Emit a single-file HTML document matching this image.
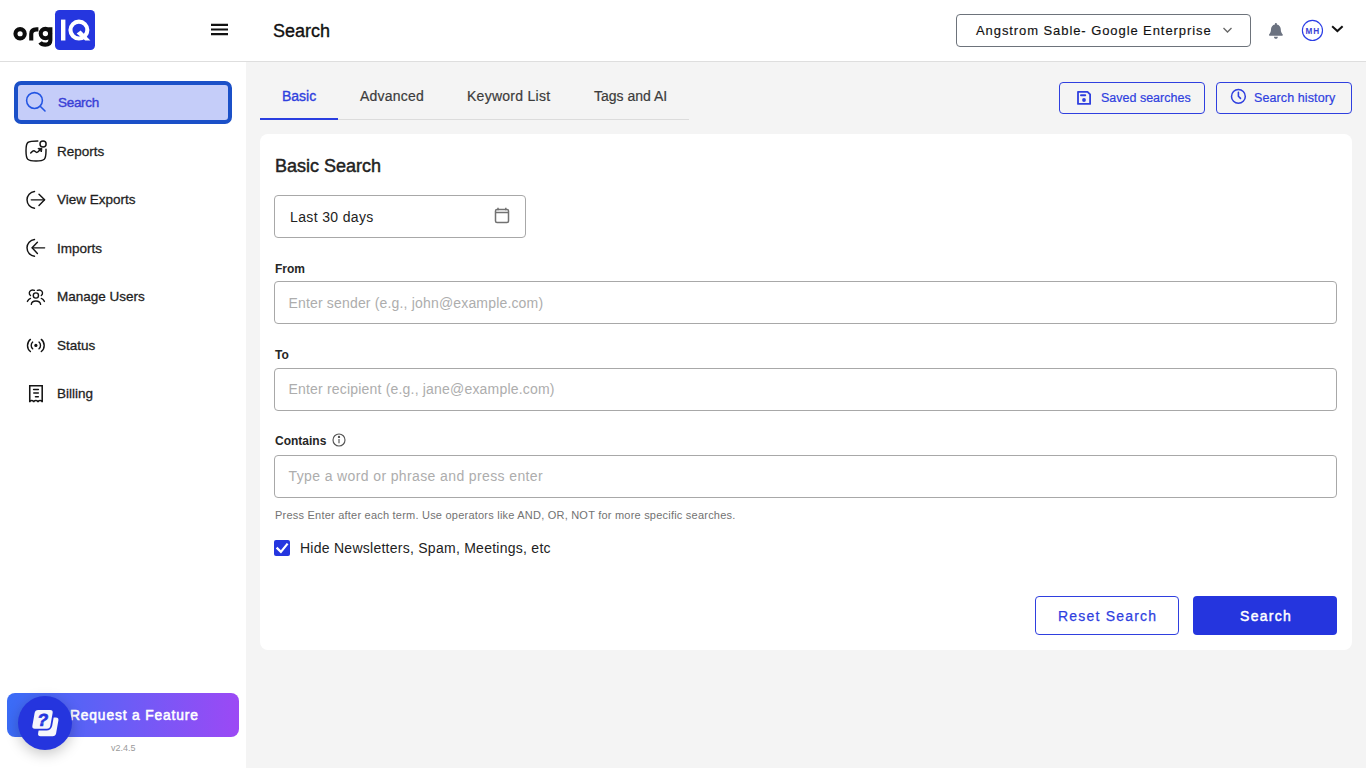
<!DOCTYPE html>
<html><head><meta charset="utf-8">
<style>
*{box-sizing:border-box;margin:0;padding:0}
html,body{width:1366px;height:768px;overflow:hidden;background:#f4f4f4;font-family:"Liberation Sans",sans-serif;color:#222}
.abs{position:absolute}
#header{position:absolute;left:0;top:0;width:1366px;height:62px;background:#fff;border-bottom:1px solid #dedede}
#sidebar{position:absolute;left:0;top:62px;width:246px;height:706px;background:#fff}
.nav{position:absolute;left:14px;width:217px;height:43px}
.nav .ic{position:absolute;left:11px;top:50%;transform:translateY(-50%)}
.nav .tx{position:absolute;left:44px;font-size:13.5px;color:#222;white-space:nowrap}
.tx2{font-size:13.5px;color:#1e1e1e;-webkit-text-stroke:.28px #1e1e1e;white-space:nowrap;line-height:16px}
.tab{position:absolute;top:88px;font-size:14px;color:#3c3c3c;white-space:nowrap;-webkit-text-stroke:.2px #3c3c3c}
#card{position:absolute;left:260px;top:134px;width:1092px;height:516px;background:#fff;border-radius:8px}
.lbl{position:absolute;left:275px;font-size:12px;font-weight:bold;color:#262626}
.inp{position:absolute;left:274px;width:1063px;height:43px;border:1px solid #a8a8a8;border-radius:4px;background:#fff}
.ph{position:absolute;left:15px;font-size:14px;color:#adadad;white-space:nowrap}
.obtn{position:absolute;border:1px solid #2f3fdf;border-radius:4px;color:#2f3fdf;background:transparent}
</style></head>
<body>
<div id="header">
  <!-- logo -->
  <svg class="abs" style="left:0;top:0" width="100" height="60" viewBox="0 0 100 60">
    <g fill="none" stroke="#0d0d0d" stroke-width="4.1">
      <circle cx="20.1" cy="33.75" r="4.65"/>
      <path d="M31.25 40.5V34C31.25 30.6 33 29.35 36.5 29.35H38.4" stroke-linecap="butt"/>
      <circle cx="45.4" cy="33.6" r="4.7"/>
      <path d="M50.35 27.3V40.2C50.35 43.5 48 44.65 45.3 44.65 43 44.65 41.2 43.9 40.1 42.3"/>
    </g>
    <rect x="55" y="10" width="40" height="40" rx="4.5" fill="#2536df"/>
    <rect x="61" y="19.6" width="4.4" height="20.9" fill="#fff"/>
    <circle cx="78.9" cy="30.05" r="8.45" fill="none" stroke="#fff" stroke-width="4.1"/>
    <path d="M76.6 33.4L80.6 30.4L90.4 40.5H85.2Z" fill="#fff"/>
  </svg>
  <!-- hamburger -->
  <svg class="abs" style="left:210px;top:20px" width="20" height="18" viewBox="0 20 20 18"><path d="M1 24.85H18M1 29.45H18M1 34.1H18" stroke="#111" stroke-width="2.05"/></svg>
  <div class="abs" style="left:273px;top:20px;font-size:18px;color:#111;line-height:22px;-webkit-text-stroke:.35px #111">Search</div>
  <!-- org dropdown -->
  <div class="abs" style="left:956px;top:14px;width:295px;height:33px;border:1px solid #6d737b;border-radius:4px"></div>
  <div class="abs" style="left:976px;top:23px;font-size:13px;letter-spacing:.92px;color:#111;-webkit-text-stroke:.15px #111;line-height:16px;white-space:nowrap">Angstrom Sable- Google Enterprise</div>
  <svg class="abs" style="left:1222px;top:26px" width="11" height="8" viewBox="0 0 11 8"><path d="M1.5 2 L5.5 6 L9.5 2" fill="none" stroke="#666" stroke-width="1.3"/></svg>
  <!-- bell -->
  <svg class="abs" style="left:1269.1px;top:23px" width="13.8" height="15.8" viewBox="0 0 448 512"><path fill="#6b7280" d="M224 0c-17.7 0-32 14.3-32 32v19.2C119 66 64 130.6 64 208v18.8c0 47-17.3 92.4-48.5 127.6l-7.4 8.3c-8.4 9.4-10.4 22.9-5.3 34.4S19.4 416 32 416H416c12.6 0 24-7.4 29.2-18.9s3.1-25-5.3-34.4l-7.4-8.3C401.3 319.2 384 273.9 384 226.8V208c0-77.4-55-142-128-156.8V32c0-17.7-14.3-32-32-32zm45.3 493.3c12-12 18.7-28.3 18.7-45.3H224 160c0 17 6.7 33.3 18.7 45.3s28.3 18.7 45.3 18.7s33.3-6.7 45.3-18.7z"/></svg>
  <!-- avatar -->
  <svg class="abs" style="left:1300px;top:18px" width="25" height="25" viewBox="0 0 25 25"><circle cx="12.45" cy="12.4" r="10.05" fill="none" stroke="#2b3ee6" stroke-width="1.15"/><text x="12.9" y="15.8" text-anchor="middle" font-family="Liberation Sans" font-weight="bold" font-size="8.2" letter-spacing="1.1" fill="#3b3fd6">MH</text></svg>
  <svg class="abs" style="left:1330px;top:23px" width="15" height="11" viewBox="0 0 15 11"><path d="M2.9 3.9 L7.4 8.1 L11.9 3.9" fill="none" stroke="#111" stroke-width="2" stroke-linecap="square"/></svg>
</div>

<div id="sidebar">
  <div class="nav" style="top:19px;height:42.5px;width:218px;background:#c5cdf9;border:4px solid #1b50c8;border-radius:7px">
    <svg class="ic" style="left:7px" width="22" height="22" viewBox="0 0 22 22"><circle cx="9.5" cy="9.5" r="7.9" fill="none" stroke="#2355e3" stroke-width="1.55"/><path d="M15.2 15.2 L20 20" stroke="#2355e3" stroke-width="1.6" stroke-linecap="round"/></svg>
    <div class="tx" style="left:40px;top:9.5px;color:#3a3fd6;letter-spacing:-.3px;-webkit-text-stroke:.4px #3a3fd6;line-height:16px">Search</div>
  </div>

  <svg class="abs" style="left:20px;top:74px" width="30" height="30" viewBox="0 0 30 30" fill="none" stroke="#141414" stroke-width="1.45" stroke-linecap="round" stroke-linejoin="round"><path d="M17.8 5C13 5 9.5 5.2 8 6.4 6.3 7.7 6 10.5 6 14.8c0 4.3.3 7 1.8 8.5 1.5 1.4 4.2 1.7 8.2 1.7s6.7-.3 8.2-1.7c1.5-1.5 1.8-4.2 1.8-8.5V13.3"/><circle cx="23.05" cy="8" r="3.05"/><path d="M10.7 17c1.3-1.4 2.3-2.6 3.5-2.2 1 .4 1.6 1.8 2.8 1.6 1-.2 1.8-1.4 3-2.6"/><path d="M18.4 12.4L21.9 12.3 21.5 15.6Z" fill="#141414" stroke-width="1"/></svg>
  <div class="abs tx2" style="left:57px;top:82px">Reports</div>
  <svg class="abs" style="left:20px;top:123px" width="30" height="30" viewBox="0 0 30 30" fill="none" stroke="#141414" stroke-width="1.45" stroke-linecap="round" stroke-linejoin="round"><path d="M14.5 6.5A8.4 8.4 0 0 0 14.5 23.2"/><path d="M11.3 14.85H24.4"/><path d="M19 9.2L24.6 14.85 19 20.5"/></svg>
  <div class="abs tx2" style="left:57px;top:130px">View Exports</div>
  <svg class="abs" style="left:20px;top:171px" width="30" height="30" viewBox="0 0 30 30" fill="none" stroke="#141414" stroke-width="1.45" stroke-linecap="round" stroke-linejoin="round"><path d="M14.5 6.5A8.4 8.4 0 0 0 14.5 23.2"/><path d="M12.3 14.85H24.6"/><path d="M17.4 9.2L12.1 14.85 17.4 20.5"/></svg>
  <div class="abs tx2" style="left:57px;top:179px">Imports</div>
  <svg class="abs" style="left:22px;top:222px" width="28" height="26" viewBox="0 0 28 26" fill="none" stroke="#141414" stroke-width="1.4" stroke-linecap="round" stroke-linejoin="round"><circle cx="13.9" cy="11.5" r="2.6"/><path d="M12.4 6.4C10 5.5 7.5 6.2 7.3 8.8 7.2 10 7.8 11 8.5 11.5"/><path d="M15.4 6.4C17.8 5.5 20.3 6.2 20.5 8.8 20.6 10 20 11 19.3 11.5"/><path d="M8.5 14.4Q6.5 15.2 5.4 17.4"/><path d="M19.3 14.4Q21.3 15.2 22.4 17.4"/><path d="M9.3 20.3C9.6 17.8 11.5 17 13.9 17S18.2 17.8 18.6 20.3"/></svg>
  <div class="abs tx2" style="left:57px;top:227px">Manage Users</div>
  <svg class="abs" style="left:22px;top:268px" width="28" height="30" viewBox="0 0 28 30" fill="none" stroke="#141414" stroke-width="1.4" stroke-linecap="round"><path d="M8.4 9.4A7.76 7.76 0 0 0 8.4 21.5"/><path d="M10.7 12.1A4.44 4.44 0 0 0 10.7 18.75"/><path d="M19.3 9.4A7.76 7.76 0 0 1 19.3 21.5"/><path d="M17 12.1A4.44 4.44 0 0 1 17 18.75"/><circle cx="13.87" cy="15.4" r="1.6" fill="#141414" stroke="none"/></svg>
  <div class="abs tx2" style="left:57px;top:276px">Status</div>
  <svg class="abs" style="left:22px;top:318px" width="28" height="28" viewBox="0 0 28 28" fill="none" stroke="#141414" stroke-width="1.55" stroke-linecap="round" stroke-linejoin="round"><path d="M7.75 22.3V5.7H20.2V22.3A2.1 1.8 0 0 0 16 22.3A2.15 1.8 0 0 0 11.7 22.3A1.97 1.8 0 0 0 7.75 22.3Z" stroke-linecap="butt" stroke-linejoin="miter"/><path d="M11.6 9.4H16.4M11.8 13.05H16.3M13.5 16.8H16.3"/></svg>
  <div class="abs tx2" style="left:57px;top:324px">Billing</div>
  <!-- request feature -->
  <div class="abs" style="left:7px;top:631px;width:232px;height:44px;border-radius:8px;background:linear-gradient(90deg,#3a6cf6 0%,#6a5df6 50%,#9c49f5 100%)"></div>
  <div class="abs" style="left:70px;top:646px;font-size:13.8px;color:#fff;letter-spacing:.85px;-webkit-text-stroke:.55px #fff;white-space:nowrap">Request a Feature</div>
  <div class="abs" style="left:18px;top:634px;width:54px;height:54px;border-radius:50%;background:#2535de;box-shadow:0 4px 14px rgba(0,0,0,.22)"></div>
  <svg class="abs" style="left:0;top:628px" width="100" height="60" viewBox="0 690 100 60">
    <g transform="translate(48.25,726.9) skewX(-10)"><rect x="-9" y="-9.4" width="18" height="18.8" rx="3" fill="#f5f6fb"/></g>
    <g transform="translate(42.5,719.4) skewX(-10)"><rect x="-9" y="-9.4" width="18" height="18.8" rx="3" fill="#f5f6fb" stroke="#2535de" stroke-width="3.6" paint-order="stroke"/>
    <text x="0.4" y="6.4" text-anchor="middle" font-family="Liberation Sans" font-weight="bold" font-size="17.5" fill="#2535de" stroke="#2535de" stroke-width=".7">?</text></g>
  </svg>
  <div class="abs" style="left:111px;top:681px;font-size:9px;color:#9a9a9a">v2.4.5</div>
</div>

<div id="main">
  <!-- tabs -->
  <div class="abs" style="left:260px;top:119px;width:429px;height:1px;background:#dcdcdc"></div>
  <div class="abs" style="left:260px;top:118px;width:78px;height:2px;background:#2a3ee0"></div>
  <div class="tab" style="left:282px;color:#2f40de;-webkit-text-stroke:.35px #2f40de">Basic</div>
  <div class="tab" style="left:360px;letter-spacing:.2px">Advanced</div>
  <div class="tab" style="left:467px;letter-spacing:.27px">Keyword List</div>
  <div class="tab" style="left:594px">Tags and AI</div>
  <!-- saved searches / history -->
  <div class="obtn" style="left:1059px;top:82px;width:146px;height:32px"></div>
  <svg class="abs" style="left:1070px;top:84px" width="30" height="28" viewBox="0 0 30 28" fill="none" stroke="#2f3fdf" stroke-width="1.8" stroke-linejoin="round" stroke-linecap="round"><path d="M8 7.8H17.5L20.1 10.4V19.9H8Z"/><path d="M11 11.2H15.2" stroke-width="2"/><circle cx="14" cy="16" r="1.9" fill="#2f3fdf" stroke="none"/></svg>
  <div class="abs" style="left:1101px;top:90.5px;font-size:12.5px;color:#2f3fdf;letter-spacing:0;-webkit-text-stroke:.2px #2f3fdf;white-space:nowrap">Saved searches</div>
  <div class="obtn" style="left:1216px;top:82px;width:136px;height:32px"></div>
  <svg class="abs" style="left:1224px;top:84px" width="28" height="28" viewBox="0 0 28 28" fill="none" stroke="#2f3fdf" stroke-width="1.5" stroke-linecap="round" stroke-linejoin="round"><circle cx="14.4" cy="12.4" r="6.9"/><path d="M14.4 8.4V12.2L16.5 14.4" stroke-width="1.6"/></svg>
  <div class="abs" style="left:1254px;top:90.5px;font-size:12.5px;color:#2f3fdf;-webkit-text-stroke:.2px #2f3fdf;letter-spacing:.1px;white-space:nowrap">Search history</div>
  <!-- card -->
  <div id="card"></div>
  <div class="abs" style="left:275px;top:156px;font-size:18px;color:#222;-webkit-text-stroke:.45px #222;white-space:nowrap">Basic Search</div>
  <div class="inp" style="top:195px;width:252px"></div>
  <div class="abs" style="left:290px;top:209px;font-size:14px;color:#222;letter-spacing:.36px;white-space:nowrap">Last 30 days</div>
  <svg class="abs" style="left:493px;top:206px" width="18" height="18" viewBox="0 0 18 18" fill="none" stroke="#727272" stroke-width="1.5"><rect x="2.5" y="3.5" width="13" height="13" rx="1.5"/><path d="M2.5 6.4h13M5 1.8v2.4M12.8 1.8v2.4"/></svg>
  <div class="lbl" style="top:262px">From</div>
  <div class="inp" style="top:281px"><div class="ph" style="top:12.5px;left:13.5px;letter-spacing:.17px">Enter sender (e.g., john@example.com)</div></div>
  <div class="lbl" style="top:348px">To</div>
  <div class="inp" style="top:368px"><div class="ph" style="top:12px;left:13.5px;letter-spacing:.19px">Enter recipient (e.g., jane@example.com)</div></div>
  <div class="lbl" style="top:434px">Contains</div>
  <svg class="abs" style="left:332px;top:433px" width="14" height="14" viewBox="0 0 14 14" fill="none" stroke="#555" stroke-width="1.15"><circle cx="7" cy="7" r="6"/><path d="M7 6v4.2"/><circle cx="7" cy="3.9" r=".6" fill="#555"/></svg>
  <div class="inp" style="top:455px"><div class="ph" style="top:12.3px;left:13.5px;letter-spacing:.38px">Type a word or phrase and press enter</div></div>
  <div class="abs" style="left:275px;top:509px;font-size:11px;color:#727272;letter-spacing:.22px;white-space:nowrap">Press Enter after each term. Use operators like AND, OR, NOT for more specific searches.</div>
  <div class="abs" style="left:274px;top:540px;width:16px;height:16px;background:#2536df;border-radius:2px"></div>
  <svg class="abs" style="left:274px;top:540px" width="16" height="16" viewBox="0 0 16 16"><path d="M2.6 7.6L6.9 11.9 13.6 3.6" fill="none" stroke="#fff" stroke-width="2.2"/></svg>
  <div class="abs" style="left:300px;top:540px;font-size:14px;color:#222;letter-spacing:.26px;white-space:nowrap">Hide Newsletters, Spam, Meetings, etc</div>
  <!-- buttons -->
  <div class="obtn" style="left:1035px;top:596px;width:144px;height:39px;background:#fff"></div>
  <div class="abs" style="left:1058px;top:608px;font-size:14px;color:#2f3fdf;letter-spacing:1.2px;-webkit-text-stroke:.25px #2f3fdf;white-space:nowrap">Reset Search</div>
  <div class="abs" style="left:1193px;top:596px;width:144px;height:39px;background:#2535de;border-radius:4px"></div>
  <div class="abs" style="left:1240px;top:608px;font-size:14px;color:#fff;letter-spacing:1.3px;-webkit-text-stroke:.45px #fff;white-space:nowrap">Search</div>
</div>
</body></html>
